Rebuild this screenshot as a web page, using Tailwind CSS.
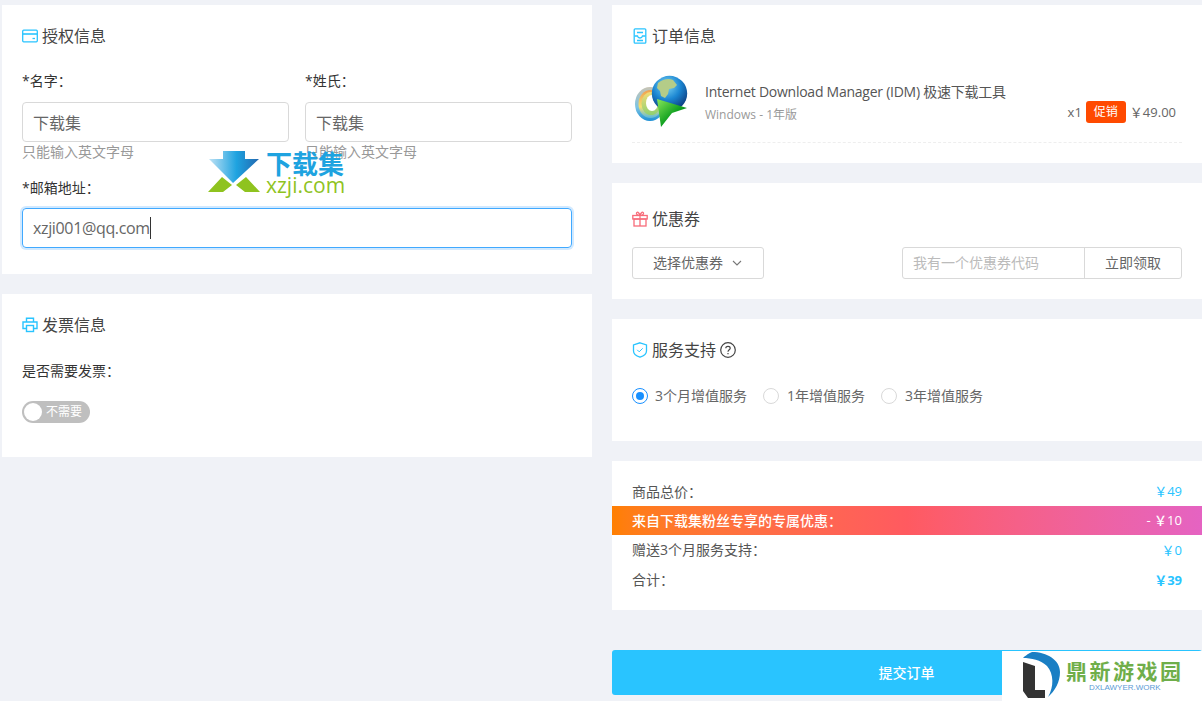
<!DOCTYPE html>
<html lang="zh">
<head>
    <meta charset="UTF-8">
    <title>提交订单</title>
    <script src="https://cdn.jsdelivr.net/npm/@tailwindcss/browser@4"></script>
</head>
<body class="bg-[#f0f2f7] font-['Open_Sans','Noto_Sans_CJK_SC',sans-serif] text-[#333] overflow-hidden">
<div class="relative w-[1202px] h-[701px] overflow-hidden pl-[2px] pt-[5px] flex gap-5">

    <!-- 左栏 -->
    <div class="w-[590px] flex flex-col gap-5">
        <div class="bg-white h-[269px] px-5 pt-5">
            <div class="flex items-center gap-1 h-[22px] text-base leading-[22px] text-[#444]">
                <svg class="w-4 h-4" viewBox="0 0 16 16" fill="none" stroke="#29c4ff" stroke-width="1.3"><rect x=".7" y="2.2" width="14.6" height="11.6" rx="1"/><path d="M.7 6h14.6" stroke-width="1.6"/><path d="M10.5 10.5h2.5"/></svg>
                <span>授权信息</span>
            </div>
            <div class="grid grid-cols-2 gap-4 mt-[24px]">
                <div>
                    <p class="text-sm leading-5 text-[#333]">*名字：</p>
                    <input value="下载集" class="mt-[11px] w-full h-10 px-[10px] border border-[#d9d9d9] rounded text-base text-[#666] font-['Noto_Sans_CJK_SC',sans-serif]">
                    <p class="text-sm leading-[20px] text-[#999]">只能输入英文字母</p>
                </div>
                <div>
                    <p class="text-sm leading-5 text-[#333]">*姓氏：</p>
                    <input value="下载集" class="mt-[11px] w-full h-10 px-[10px] border border-[#d9d9d9] rounded text-base text-[#666] font-['Noto_Sans_CJK_SC',sans-serif]">
                    <p class="text-sm leading-[20px] text-[#999]">只能输入英文字母</p>
                </div>
            </div>
            <p class="text-sm leading-5 text-[#333] mt-[16px]">*邮箱地址：</p>
            <div class="mt-[10px] h-10 px-[10px] border border-[#40a9ff] rounded shadow-[0_0_0_2px_rgba(24,144,255,0.2)] flex items-center text-base tracking-[-0.35px] text-[#666]">
                <span>xzji001@qq.com</span><span class="w-px h-[22px] bg-[#333]"></span>
            </div>
        </div>

        <div class="bg-white h-[163px] px-5 pt-5">
            <div class="flex items-center gap-1 h-[22px] text-base leading-[22px] text-[#444]">
                <svg class="w-4 h-4" viewBox="0 0 16 16" fill="none" stroke="#29c4ff" stroke-width="1.4"><path d="M4.5 5V1.2h7V5"/><path d="M4 11.5H1V5h14v6.500h-3"/><rect x="4.500" y="8.500" width="7" height="6"/></svg>
                <span>发票信息</span>
            </div>
            <p class="text-sm leading-5 text-[#333] mt-[25px]">是否需要发票：</p>
            <div class="mt-[20px] w-[68px] h-[22px] rounded-full bg-[#bfbfbf] flex items-center pl-[2px] gap-[4px]">
                <span class="w-[18px] h-[18px] rounded-full bg-white"></span>
                <span class="text-xs leading-none text-white">不需要</span>
            </div>
        </div>
    </div>

    <!-- 右栏 -->
    <div class="w-[590px] flex flex-col gap-5">
        <div class="bg-white h-[158px] px-5 pt-5">
            <div class="flex items-center gap-1 h-[22px] text-base leading-[22px] text-[#444]">
                <svg class="w-4 h-4" viewBox="0 0 16 16" fill="none" stroke="#29c4ff" stroke-width="1.3"><rect x="2.200" y=".8" width="11.600" height="14.400" rx="1"/><path d="M5 4.500h6M2.500 8H5.500q.5 2 2.500 2t2.500-2h3M5 12.500h6"/></svg>
                <span>订单信息</span>
            </div>
            <div class="mt-[22px] h-[74px] border-b border-dashed border-[#eee] flex">
                <svg class="mt-[6px] w-[56px] h-[56px] shrink-0" viewBox="0 0 56 56">
                    <defs>
                        <radialGradient id="globe" cx="42%" cy="28%" r="78%"><stop offset="0" stop-color="#7ed6f5"/><stop offset=".5" stop-color="#1b86d2"/><stop offset="1" stop-color="#0a2f70"/></radialGradient>
                        <linearGradient id="arrow" x1="0" y1="0" x2="1" y2="1"><stop offset="0" stop-color="#8ae85a"/><stop offset=".55" stop-color="#10a020"/><stop offset="1" stop-color="#055a10"/></linearGradient>
                        <linearGradient id="band1" x1="0" y1="0" x2="0" y2="1"><stop offset="0" stop-color="#c8c4b4"/><stop offset=".6" stop-color="#7dc4e4"/><stop offset="1" stop-color="#1d8fd4"/></linearGradient>
                        <linearGradient id="band2" x1="0" y1="0" x2="0" y2="1"><stop offset="0" stop-color="#f0a050"/><stop offset=".6" stop-color="#f4e070"/><stop offset="1" stop-color="#58b8dc"/></linearGradient>
                        <linearGradient id="band3" x1="0" y1="0" x2="0" y2="1"><stop offset="0" stop-color="#f4dc78"/><stop offset="1" stop-color="#8fd070"/></linearGradient>
                    </defs>
                    <ellipse cx="18" cy="29" rx="15" ry="17" fill="url(#band1)"/>
                    <ellipse cx="18.500" cy="29" rx="12" ry="14" fill="url(#band2)"/>
                    <ellipse cx="19" cy="28.500" rx="9.500" ry="11.500" fill="url(#band3)"/>
                    <ellipse cx="20" cy="28" rx="6" ry="8" fill="#fff"/>
                    <circle cx="37.500" cy="18.500" r="17.700" fill="url(#globe)"/>
                    <path d="M26 8c5-4 11-5 15-3l4 5-3 3-5 1-1 5-3 4-4-2-1-5-3-3z" fill="#b4cc88"/>
                    <path d="M25 24L55 33 40 38 29 52z" fill="url(#arrow)"/>
                </svg>
                <div class="ml-[17px] pt-[13px]">
                    <p class="text-sm leading-5 tracking-[-0.25px] text-[#555]">Internet Download Manager (IDM) 极速下载工具</p>
                    <p class="text-xs leading-5 mt-[3px] text-[#999]">Windows - 1年版</p>
                </div>
                <div class="ml-auto flex items-start gap-[4px] pt-[32px] pr-[6px] text-[13px] leading-[22px] text-[#666]">
                    <span>x1</span>
                    <span class="bg-[#ff4a00] text-white text-xs leading-[22px] rounded-[3px] px-[8px]">促销</span>
                    <span>￥49.00</span>
                </div>
            </div>
        </div>

        <div class="bg-white h-[116px] px-5 pt-[25px]">
            <div class="flex items-center gap-1 h-[22px] text-base leading-[22px] text-[#444]">
                <svg class="w-4 h-4" viewBox="0 0 16 16" fill="none" stroke="#f76c7a" stroke-width="1.3"><rect x=".8" y="4.500" width="14.400" height="3.500"/><rect x="2" y="8" width="12" height="7"/><path d="M8 4.500V15M8 4.500C6 4.500 4 3.500 4.500 2S7 1 8 4.500C9 1 11 .5 11.500 2S10 4.500 8 4.500"/></svg>
                <span>优惠券</span>
            </div>
            <div class="mt-[17px] flex justify-between">
                <div class="w-[132px] h-8 border border-[#d9d9d9] rounded-[3px] flex items-center pl-5 gap-[9px] text-sm text-[#666]">
                    <span>选择优惠券</span>
                    <svg class="w-[10px] h-[10px]" viewBox="0 0 10 10" fill="none" stroke="#777" stroke-width="1.100"><path d="M1 3l4 4 4-4"/></svg>
                </div>
                <div class="w-[280px] h-8 border border-[#d9d9d9] rounded-[3px] flex items-center text-sm">
                    <span class="w-[181px] pl-[10px] text-[#bbb]">我有一个优惠券代码</span>
                    <span class="flex-1 h-full border-l border-[#d9d9d9] flex items-center justify-center text-[#666]">立即领取</span>
                </div>
            </div>
        </div>

        <div class="bg-white h-[122px] px-5 pt-5">
            <div class="flex items-center gap-1 h-[22px] text-base leading-[22px] text-[#444]">
                <svg class="w-4 h-4" viewBox="0 0 16 16" fill="none" stroke="#29c4ff" stroke-width="1.3"><path d="M8 .8l6.500 2.200v6c0 3-3 5-6.500 6.200C4.500 14 1.500 12 1.500 9V3z"/><path d="M5.200 7.800l2 2 3.500-3.500" stroke-width="1"/></svg>
                <span>服务支持</span>
                <svg class="w-4 h-4" viewBox="0 0 16 16" fill="none" stroke="#444" stroke-width="1.200"><circle cx="8" cy="8" r="7.300"/><path d="M5.800 6.200C5.800 3.700 10.200 3.700 10.200 6.200 10.200 7.800 8 7.800 8 9.800"/><path d="M8 11v1.300"/></svg>
            </div>
            <div class="mt-[25px] flex items-center text-sm leading-5 text-[#666]">
                <span class="w-4 h-4 rounded-full border border-[#1890ff] flex items-center justify-center"><span class="w-2 h-2 rounded-full bg-[#1890ff]"></span></span>
                <span class="ml-[7px]">3个月增值服务</span>
                <span class="ml-4 w-4 h-4 rounded-full border border-[#d9d9d9]"></span>
                <span class="ml-[8px]">1年增值服务</span>
                <span class="ml-4 w-4 h-4 rounded-full border border-[#d9d9d9]"></span>
                <span class="ml-[8px]">3年增值服务</span>
            </div>
        </div>

        <div class="bg-white h-[149px] pt-[16px] text-sm text-[#555]">
            <div class="flex justify-between items-center h-[29px] px-5"><span>商品总价：</span><span class="text-[13px] text-[#29c4ff]">￥49</span></div>
            <div class="flex justify-between items-center h-[29px] px-5 text-white font-medium bg-gradient-to-r from-[#ff7f00] via-[#ff5a60] to-[#e563c2]"><span>来自下载集粉丝专享的专属优惠：</span><span class="text-[13px]">- ￥10</span></div>
            <div class="flex justify-between items-center h-[30px] px-5"><span>赠送3个月服务支持：</span><span class="text-[13px] text-[#29c4ff]">￥0</span></div>
            <div class="flex justify-between items-center h-[30px] px-5"><span>合计：</span><span class="text-[13px] text-[#29c4ff] font-bold">￥39</span></div>
        </div>

        <div class="mt-[20px] h-[45px] bg-[#29c4ff] rounded-[3px] flex items-center justify-center text-sm font-medium text-white pr-[1px]">提交订单</div>
    </div>

    <!-- 水印 下载集 -->
    <div class="absolute left-[208px] top-[150px] flex items-start">
        <svg class="w-[53px] h-[43px]" viewBox="0 0 53 43">
            <defs><linearGradient id="dl" x1="0" y1="0" x2="1" y2="0"><stop offset="0" stop-color="#bfe2f5"/><stop offset=".55" stop-color="#1ea3e0"/><stop offset="1" stop-color="#2268b0"/></linearGradient></defs>
            <path d="M1 9H15V1H37V9H51L25 33z" fill="url(#dl)"/>
            <path d="M14 27L24 35 15 42H0zM38 27L52 42H37L28 35z" fill="#8fc31f"/>
        </svg>
        <div class="ml-[5px]">
            <p class="text-[26px] leading-[26px] font-bold text-[#1ea3e0] font-['Noto_Sans_CJK_SC',sans-serif]">下载集</p>
            <p class="text-[21px] leading-[19px] text-[#8fc31f] font-['Open_Sans',sans-serif]">xzji.com</p>
        </div>
    </div>

    <!-- 水印 鼎新游戏园 -->
    <div class="absolute left-[1002px] top-[651px] w-[200px] h-[50px] bg-white flex items-start">
        <svg class="ml-[21px] mt-[1px] w-[42px] h-[47px]" viewBox="0 0 42 47">
            <path d="M0 6C4 2 9 0 9 0 24 0 37 8 37 20 37 30 32 39 25 45 31 35 31 22 24 14 18 8 8 6 0 6z" fill="#1a7fc4"/>
            <path d="M0 10L12 14V38H22V46H5L0 39z" fill="#333"/>
        </svg>
        <div class="ml-[1px] mt-[7px] text-center">
            <p class="text-[21px] leading-[24px] font-bold text-[#6fae4a] tracking-[2.500px] font-['Noto_Sans_CJK_SC',sans-serif]">鼎新游戏园</p>
            <p class="text-[8px] leading-[10px] mt-[1px] text-[#5b9bd5] font-['Liberation_Sans',sans-serif]">DXLAWYER.WORK</p>
        </div>
    </div>
</div>
</body>
</html>
